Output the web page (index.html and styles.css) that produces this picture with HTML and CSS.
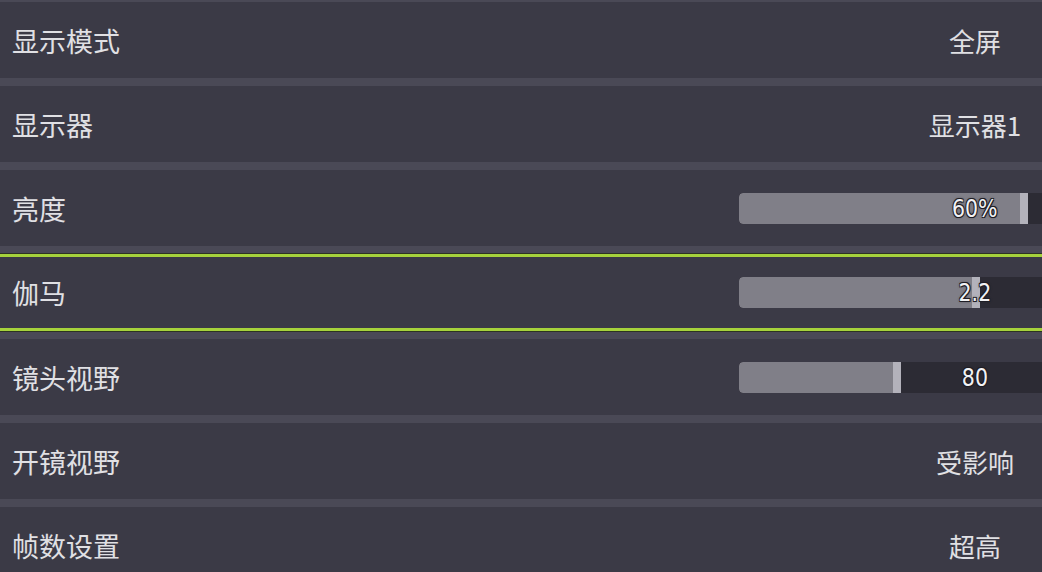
FILE: index.html
```html
<!DOCTYPE html>
<html lang="zh-CN">
<head>
  <meta charset="UTF-8" />
  <meta name="viewport" content="width=device-width, initial-scale=1.0"/>
  <title>画面设置</title>
  <link rel="stylesheet" href="styles.css">
</head>
<body>

  <div class="list">
    <div class="row">
      <span class="label">显示模式</span>
      <div class="ctl"><span class="val">全屏</span></div>
    </div>

    <div class="row">
      <span class="label">显示器</span>
      <div class="ctl"><span class="val">显示器1</span></div>
    </div>

    <div class="row">
      <span class="label">亮度</span>
      <div class="ctl">
        <div class="track"><div class="fill" style="width: 281px"></div><div class="knob"></div></div>
        <span class="val num"><span>60%</span></span>
      </div>
    </div>

    <div class="row selected">
      <span class="label">伽马</span>
      <div class="ctl">
        <div class="track"><div class="fill" style="width: 233px"></div><div class="knob"></div></div>
        <span class="val num"><span>2.2</span></span>
      </div>
    </div>

    <div class="row">
      <span class="label">镜头视野</span>
      <div class="ctl">
        <div class="track"><div class="fill" style="width: 154px"></div><div class="knob"></div></div>
        <span class="val num"><span>80</span></span>
      </div>
    </div>

    <div class="row">
      <span class="label">开镜视野</span>
      <div class="ctl"><span class="val">受影响</span></div>
    </div>

    <div class="row">
      <span class="label">帧数设置</span>
      <div class="ctl"><span class="val">超高</span></div>
    </div>
  </div>

</body>
</html>
```
FILE: styles.css
```css
body {
  margin: 0;
  background: #4a4956;
  font-family: "Noto Sans CJK SC", "Noto Sans", sans-serif;
  color: #e0e0e4;
  overflow: hidden;
}

.list {
  display: flex;
  flex-direction: column;
  gap: 8px;
  padding-top: 2px;
}

.row {
  display: flex;
  align-items: center;
  height: 76px;
  box-sizing: border-box;
  padding-left: 12px;
  background: #3b3a46;
}

.row.selected {
  height: 77px;
  border-top: 3px solid #a6d23c;
  border-bottom: 3px solid #a6d23c;
  box-shadow: 0 0 0 1px #2d3323;
}

.label {
  flex: 1;
  font-size: 27px;
  line-height: 1;
}

.ctl {
  width: 303px;
  display: grid;
  grid-template-columns: 171px 130px 2px;
  align-items: center;
}

.track {
  grid-column: 1 / -1;
  grid-row: 1;
  display: flex;
  height: 31px;
  background: #2c2b34;
  border-radius: 4px 0 0 4px;
  overflow: hidden;
}

.fill {
  background: #807f88;
  border-radius: 4px 0 0 4px;
}

.knob {
  width: 8px;
  background: #b3b2bb;
}

.val {
  grid-column: 2;
  grid-row: 1;
  text-align: center;
  font-size: 26px;
  line-height: 31px;
}

.val.num {
  font-family: "DejaVu Sans", sans-serif;
  font-size: 25px;
  color: #f2f2f4;
  text-shadow: 1px 1px 0 #1e1d24, -1px -1px 0 #1e1d24, 1px -1px 0 #1e1d24, -1px 1px 0 #1e1d24, 0 0 3px #1e1d24;
}

.val.num span {
  display: inline-block;
  transform: scaleX(0.82);
}
```
